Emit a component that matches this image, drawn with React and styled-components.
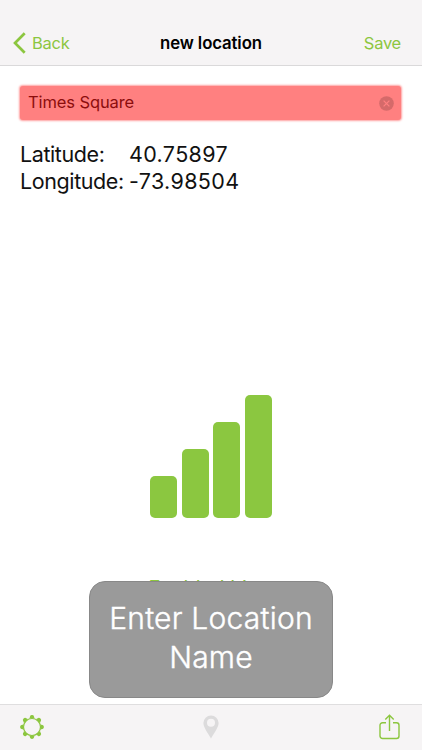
import React from "react";
import styled, {createGlobalStyle} from "styled-components";

const GREEN = "#8cc63f";
const BAR_BACKGROUND = "#f6f4f5";

const GlobalStyle = createGlobalStyle`
    body {
        margin: 0;
        background: white;
        font-family: Inter, "Liberation Sans", sans-serif;
    }
`

const Screen = styled.div`
    position: relative;
    display: flex;
    flex-direction: column;
    width: 422px;
    height: 750px;
    overflow: hidden;
    box-sizing: border-box;
    background: white;
`

const NavBar = styled.header`
    display: grid;
    grid-template-columns: 1fr auto 1fr;
    align-items: center;
    box-sizing: border-box;
    height: 66px;
    padding: 20px 21px 0 13px;
    background: ${BAR_BACKGROUND};
    border-bottom: 1px solid #dad9da;
`

const NavButton = styled.button`
    display: flex;
    align-items: center;
    justify-self: ${props => props.$align};
    gap: 6px;
    padding: 0;
    border: none;
    background: none;
    color: ${GREEN};
    font-family: inherit;
    font-size: 16.5px;
    line-height: 22px;
    letter-spacing: -0.25px;
`

const Title = styled.div`
    padding-left: 8px;
    font-weight: 600;
    font-size: 16.8px;
    line-height: 22px;
    letter-spacing: -0.12px;
    color: black;
`

const Content = styled.main`
    display: flex;
    flex-direction: column;
    flex: 1;
    padding: 20px 21px 0 20px;
`

const NameField = styled.div`
    display: flex;
    align-items: center;
    justify-content: space-between;
    box-sizing: border-box;
    height: 34px;
    padding: 0 7px 0 8px;
    border-radius: 3px;
    background: #ff8080;
    box-shadow: 0 0 2px 1px #ffa0a0;
    color: #8c0d0d;
    font-size: 16.5px;
    line-height: 20px;
    letter-spacing: -0.1px;
`

const FieldText = styled.span`
    margin-bottom: 2px;
`

const Coordinates = styled.div`
    display: grid;
    grid-template-columns: 109px auto;
    margin-top: 21px;
    font-size: 21.5px;
    line-height: 27px;
    white-space: nowrap;
    color: #111;
`

const CoordinateLabel = styled.span`
    letter-spacing: -0.4px;
`

const CoordinateValue = styled.span`
    letter-spacing: 0.35px;
`

const Signal = styled.div`
    display: flex;
    align-items: flex-end;
    align-self: center;
    gap: 4.67px;
    margin: 200px 0 0 1px;
`

const SignalBar = styled.div`
    width: 27px;
    height: ${props => props.$height}px;
    border-radius: 5px;
    background: #8bc740;
`

const SignalLabel = styled.div`
    align-self: center;
    width: 124px;
    margin-top: 56px;
    color: ${GREEN};
    font-size: 20px;
    line-height: 28px;
    white-space: nowrap;
`

const Toast = styled.div`
    position: absolute;
    left: 89px;
    top: 581px;
    width: 244px;
    height: 117px;
    box-sizing: border-box;
    padding-top: 17px;
    border: 1px solid #888;
    border-radius: 16px;
    background: #9a9a9a;
    color: white;
    font-size: 30px;
    font-weight: 300;
    line-height: 39px;
    letter-spacing: 0.22px;
    text-align: center;
    -webkit-text-stroke: 0.4px white;
`

const ToolBar = styled.footer`
    display: flex;
    align-items: center;
    justify-content: space-between;
    box-sizing: border-box;
    height: 46px;
    padding: 0 22px 2px 20px;
    background: ${BAR_BACKGROUND};
    border-top: 1px solid #dfdedf;
`

const TEETH = [0, 45, 90, 135, 180, 225, 270, 315];

const BackIcon = () => (
    <svg width="13" height="22" viewBox="0 0 13 22" fill="none" stroke={GREEN} strokeWidth="2.7">
        <path d="M11.7 1.2 2 11l9.7 9.8"/>
    </svg>
)

const ClearIcon = () => (
    <svg width="15" height="15" viewBox="0 0 15 15">
        <circle cx="7.5" cy="7.5" r="7.3" fill="#d56a6a"/>
        <path d="m4.6 4.6 5.8 5.8m0-5.8-5.8 5.8" stroke="#ff8080" strokeWidth="1.2"/>
    </svg>
)

const GearIcon = () => (
    <svg width="24" height="24" viewBox="-12 -12 24 24">
        <circle r="8.5" fill="none" stroke={GREEN} strokeWidth="1.2"/>
        {TEETH.map(angle => (
            <path key={angle} d="M-3.2-8.4Q-2-9-2-10.6Q-1.7-11.9 0-11.9Q1.7-11.9 2-10.6Q2-9 3.2-8.4Z"
                  fill={GREEN} transform={`rotate(${angle})`}/>
        ))}
    </svg>
)

const PinIcon = () => (
    <svg width="18" height="24" viewBox="0 0 18 24">
        <path fillRule="evenodd" fill="#dcdbdc"
              d="M8 .5a7.6 7.6 0 0 1 7.6 7.6C15.6 12 12 17 8 23.5 4 17 .4 12 .4 8.1A7.6 7.6 0 0 1 8 .5Zm0 3.3a4 4 0 1 0 0 8 4 4 0 0 0 0-8Z"/>
    </svg>
)

const ShareIcon = () => (
    <svg width="21" height="26" viewBox="0 0 21 26" fill="none" stroke={GREEN} strokeWidth="1.4">
        <path d="M7 8.7H3.5A2.5 2.5 0 0 0 1 11.2V22a2.5 2.5 0 0 0 2.5 2.5h14A2.5 2.5 0 0 0 20 22V11.2a2.5 2.5 0 0 0-2.5-2.5H14M10.5 17V1.5M6.3 5.5l4.2-4.3 4.2 4.3"/>
    </svg>
)

export default function App() {
    return (
        <Screen>
            <GlobalStyle/>
            <NavBar>
                <NavButton $align="start"><BackIcon/>Back</NavButton>
                <Title>new location</Title>
                <NavButton $align="end">Save</NavButton>
            </NavBar>
            <Content>
                <NameField>
                    <FieldText>Times Square</FieldText>
                    <ClearIcon/>
                </NameField>
                <Coordinates>
                    <CoordinateLabel>Latitude:</CoordinateLabel>
                    <CoordinateValue>40.75897</CoordinateValue>
                    <CoordinateLabel>Longitude:</CoordinateLabel>
                    <CoordinateValue>-73.98504</CoordinateValue>
                </Coordinates>
                <Signal>
                    {[42, 69, 96, 123].map(height => <SignalBar key={height} $height={height}/>)}
                </Signal>
                <SignalLabel>Enabled hi</SignalLabel>
            </Content>
            <ToolBar>
                <GearIcon/>
                <PinIcon/>
                <ShareIcon/>
            </ToolBar>
            <Toast>Enter Location<br/>Name</Toast>
        </Screen>
    );
};
